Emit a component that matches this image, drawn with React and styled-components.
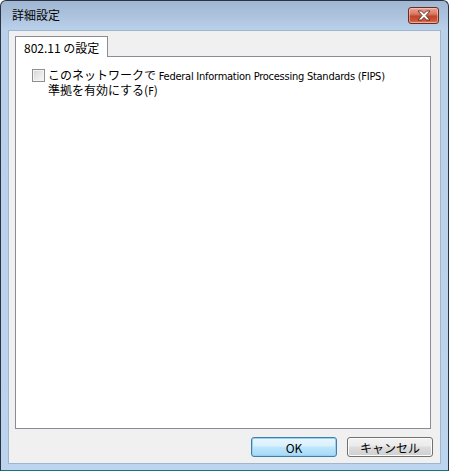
import React from 'react';
import styled, { createGlobalStyle } from 'styled-components';

const GlobalStyle = createGlobalStyle`
  html, body {
    margin: 0;
    padding: 0;
    background: #ffffff;
  }
  body {
    font-family: "Noto Sans CJK JP", "Noto Sans", sans-serif;
    font-size: 12px;
    color: #000;
  }
`;

const Window = styled.div`
  width: 449px;
  height: 471px;
  box-sizing: border-box;
  border: 1px solid #2b3340;
  border-bottom-color: #1e6e8a;
  border-radius: 6px 6px 0 0;
  background: linear-gradient(180deg, #a0b7d3 0px, #acc2dc 14px, #b9d0ea 28px, #bcd4ee 100%);
  display: flex;
  flex-direction: column;
  overflow: hidden;
`;

const TitleBar = styled.div`
  height: 29px;
  flex: none;
  display: flex;
  align-items: center;
  justify-content: space-between;
  padding: 0 9px 0 11px;
`;

const Title = styled.div`
  font-size: 12px;
  line-height: 14px;
  margin-top: -2px;
  color: #000;
`;

const CloseButton = styled.div`
  width: 29px;
  height: 15px;
  border: 1px solid #6b2a22;
  border-radius: 3px;
  background: linear-gradient(180deg, #e9a596 0%, #d97a63 40%, #c1452c 55%, #cc5638 85%, #e08766 100%);
  box-shadow: inset 0 0 0 1px rgba(255, 220, 210, 0.5);
  display: flex;
  align-items: center;
  justify-content: center;
  margin-top: -1px;
`;

const Client = styled.div`
  flex: 1;
  margin: 0 7px 6px;
  background: #f0f0f0;
  border: 1px solid #9fb6cf;
  display: flex;
  flex-direction: column;
  padding: 5px 8px 6px 6px;
  min-height: 0;
`;

const TabStrip = styled.div`
  display: flex;
  position: relative;
  z-index: 1;
  margin-bottom: -1px;
`;

const Tab = styled.div`
  height: 20px;
  padding: 0 8px;
  display: flex;
  align-items: center;
  background: #ffffff;
  border: 1px solid #898c95;
  border-bottom: none;
  font-size: 12px;
`;

const Panel = styled.div`
  flex: 1;
  margin-right: 1px;
  background: #ffffff;
  border: 1px solid #898c95;
  padding: 12px 16px;
`;

const CheckRow = styled.label`
  display: flex;
  align-items: flex-start;
  gap: 3px;
`;

const CheckBox = styled.span`
  width: 11px;
  height: 11px;
  flex: none;
  border: 1px solid #8f8f8f;
  background: linear-gradient(135deg, #d6d6d6 0%, #ebebeb 60%, #f8f8f8 100%);
  box-shadow: inset 0 0 0 1px #f4f4f4;
`;

const CheckText = styled.span`
  font-size: 12px;
  line-height: 13px;
  margin-top: -1px;
`;

const Latin = styled.span`
  font-family: "DejaVu Sans Condensed", "Liberation Sans Narrow", "Liberation Sans", sans-serif;
  font-size: 11px;
  letter-spacing: -0.25px;
`;

const ButtonRow = styled.div`
  display: flex;
  justify-content: flex-end;
  gap: 10px;
  margin-top: 8px;
  margin-right: -1px;
`;

const Button = styled.div`
  width: 84px;
  height: 18px;
  border-radius: 3px;
  display: flex;
  align-items: center;
  justify-content: center;
  font-size: 12px;
  border: 1px solid ${p => (p.$primary ? '#3c7fb1' : '#707070')};
  background: ${p =>
    p.$primary
      ? 'linear-gradient(180deg, #eaf6fd 0%, #d9f0fc 45%, #bee6fd 50%, #a7d9f5 100%)'
      : 'linear-gradient(180deg, #f2f2f2 0%, #ebebeb 45%, #dddddd 50%, #cfcfcf 100%)'};
  box-shadow: inset 0 0 0 1px ${p => (p.$primary ? '#98d1ef' : '#fcfcfc')};
`;

const CloseIcon = () => (
  <svg width="14" height="11" viewBox="0 0 14 11">
    <path
      d="M1 1 L4.5 1 L7 3.6 L9.5 1 L13 1 L9 5.5 L13 10 L9.5 10 L7 7.4 L4.5 10 L1 10 L5 5.5 Z"
      fill="#ffffff"
      stroke="#5a2a24"
      strokeWidth="0.9"
      strokeLinejoin="round"
    />
  </svg>
);

const App = () => (
  <>
    <GlobalStyle />
    <Window>
      <TitleBar>
        <Title>詳細設定</Title>
        <CloseButton>
          <CloseIcon />
        </CloseButton>
      </TitleBar>
      <Client>
        <TabStrip>
          <Tab>802.11 の設定</Tab>
        </TabStrip>
        <Panel>
          <CheckRow>
            <CheckBox />
            <CheckText>
              このネットワークで <Latin>Federal Information Processing Standards (FIPS)</Latin>
              <br />
              準拠を有効にする(<Latin>F</Latin>)
            </CheckText>
          </CheckRow>
        </Panel>
        <ButtonRow>
          <Button $primary>OK</Button>
          <Button>キャンセル</Button>
        </ButtonRow>
      </Client>
    </Window>
  </>
);

export default App;
